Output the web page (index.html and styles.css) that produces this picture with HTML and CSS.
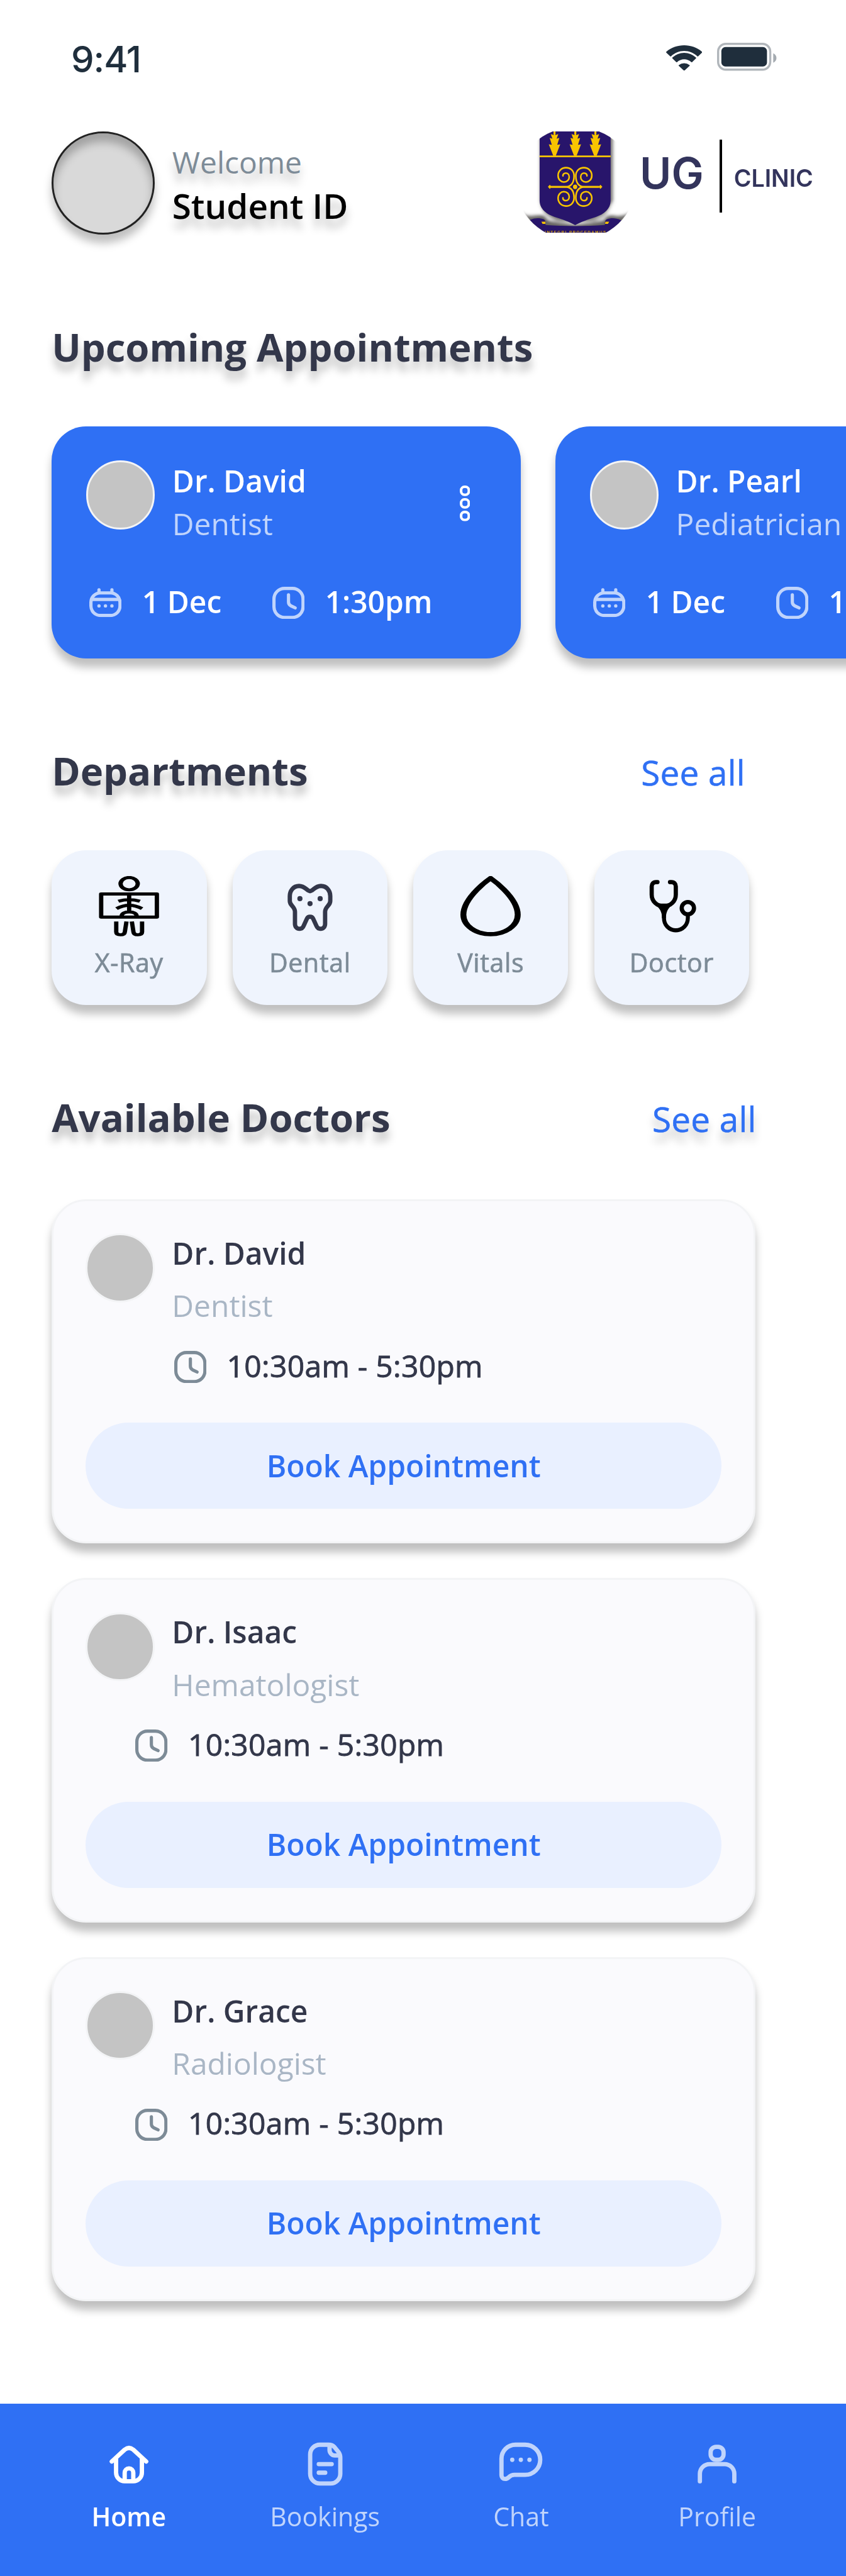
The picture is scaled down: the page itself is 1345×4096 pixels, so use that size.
FILE: index.html
```html
<!DOCTYPE html>
<html lang="en">
<head>
<meta charset="utf-8">
<title>UG Clinic</title>
<link rel="stylesheet" href="styles.css">
</head>
<body>
<svg class="defs" aria-hidden="true">
  <symbol id="calendar" viewBox="0 0 15 13.5">
    <g fill="none" stroke="currentColor" stroke-width="1.5">
      <rect x=".75" y="2.25" width="13.5" height="10.5" rx="4.4"/>
      <path d="M1.2 5.3h12.6"/>
      <path d="M4.5 .8v1.4M10.5 .8v1.4" stroke-linecap="round"/>
    </g>
    <g fill="currentColor"><circle cx="4.5" cy="8.3" r=".78"/><circle cx="7.5" cy="8.3" r=".78"/><circle cx="10.5" cy="8.3" r=".78"/></g>
  </symbol>
  <symbol id="clock" viewBox="0 0 15 15">
    <g fill="none" stroke="currentColor" stroke-width="1.5">
      <rect x=".75" y=".75" width="13.5" height="13.5" rx="4.9"/>
      <path d="M7.5 3.75V7.1c0 .8.3 1.3 1 1.7l2.1 1" stroke-linecap="round"/>
    </g>
  </symbol>
  <symbol id="more" viewBox="0 0 4.8 16.6">
    <g fill="none" stroke="currentColor" stroke-width="1.2">
      <rect x=".6" y=".6" width="3.6" height="3.7" rx="1.6"/>
      <rect x=".6" y="6.45" width="3.6" height="3.7" rx="1.6"/>
      <rect x=".6" y="12.3" width="3.6" height="3.7" rx="1.6"/>
    </g>
  </symbol>
</svg>

<div class="page">
  <div class="status">
    <span class="status-time">9:41</span>
    <svg class="wifi" viewBox="0 0 16.8 11.8">
      <g fill="#1f2e3c">
        <path d="M8.4 2.6c2.3 0 4.5.9 6.1 2.5.1.1.3.1.4 0l1.8-1.7a.3.3 0 0 0 0-.4C12.1-1 4.700-1 .1 3a.3.3 0 0 0 0 .4l1.800 1.7c.1.100.3.100.4 0C3.900 3.500 6.100 2.600 8.400 2.600z"/>
        <path d="M8.400 6.500c1.200 0 2.400.5 3.300 1.300.1.100.3.100.4 0l1.800-1.700c.1-.1.1-.3 0-.4a8 8 0 0 0-11 0c-.1.100-.1.300 0 .4l1.800 1.700c.1.100.3.100.4 0 .9-.8 2.100-1.300 3.300-1.300z"/>
        <path d="M10.900 9.200c.1.100.1.300 0 .4l-2.300 2.100a.3.3 0 0 1-.4 0L5.900 9.600c-.1-.1-.1-.3 0-.4a4 4 0 0 1 5 0z"/>
      </g>
    </svg>
    <svg class="battery" viewBox="0 0 27.800 13">
      <rect x=".5" y=".5" width="24.200" height="12" rx="3.600" fill="none" stroke="#1f2e3c" stroke-opacity=".35"/>
      <rect x="2" y="2" width="21.200" height="9" rx="1.900" fill="#1f2e3c"/>
      <path d="M26.100 4.900v4.400c.9-.4 1.500-1.200 1.500-2.200s-.6-1.800-1.500-2.200z" fill="#1f2e3c" fill-opacity=".4"/>
    </svg>
  </div>

  <header class="header">
    <div class="me"></div>
    <div class="greeting">
      <div class="welcome">Welcome</div>
      <div class="student">Student ID</div>
    </div>
    <div class="brand">
      <svg class="crest" viewBox="20 18 586 564">
        <defs>
          <clipPath id="crest-clip"><ellipse cx="313" cy="309" rx="335" ry="315"/></clipPath>
          <filter id="soft" x="-20%" y="-20%" width="140%" height="140%"><feGaussianBlur stdDeviation="10"/></filter>
          <g id="tree">
            <path d="M-5 16H5L6 28L4 38L21 33L12 58L27 54L15 92L32 90L7 154H-7L-32 90L-15 92L-27 54L-12 58L-21 33L-4 38L-6 28Z"/>
          </g>
          <g id="scroll">
            <path d="M-133 0H-46C-18 -5 -5 -29 -5 -61C-5 -89 -24 -107 -50 -107C-76 -107 -94 -87 -94 -64C-94 -40 -78 -27 -62 -27C-44 -27 -32 -39 -32 -55C-32 -69 -41 -77 -51 -77C-61 -77 -68 -70 -67 -61"/>
          </g>
        </defs>
        <g clip-path="url(#crest-clip)">
          <g filter="url(#soft)" fill="#4d4a48">
            <path d="M114 10H520V420C500 470 470 500 420 520H200C140 490 114 450 114 420Z" opacity=".75"/>
            <path d="M10 470C40 505 90 480 130 485C150 490 150 510 165 516C260 540 370 540 470 514C480 490 500 482 530 488C570 495 600 480 620 470V590H10Z" opacity=".85"/>
          </g>
          <path d="M111 420C125 490 210 520 309 541C405 515 490 490 507 420L540 400V460C500 475 480 480 466 492L445 508L309 534L190 516L155 500L130 478L90 470V400Z" fill="#fff" opacity=".72" filter="url(#soft)"/>
          <path d="M20 540C55 500 100 495 135 508C150 520 140 532 145 540C250 548 370 548 474 540C478 530 470 518 485 508C520 496 570 500 610 550V600H20Z" fill="#28156b"/>
          <path d="M111 0H507V405C507 450 470 480 425 495C380 510 340 522 309 541C280 522 240 510 195 495C150 480 111 450 111 405Z" fill="#28156b"/>
          <path d="M111 157H507" stroke="#f8c400" stroke-width="10"/>
          <g fill="#f8c400">
            <use href="#tree" x="194"/><use href="#tree" x="310"/><use href="#tree" x="422"/>
            <ellipse cx="309" cy="327" rx="12" ry="13"/>
            <path d="M157 327L168 315L177 327L168 339Z"/><path d="M461 327L450 315L441 327L450 339Z"/>
            <path d="M121 521H143V534H127Z"/><path d="M478 521H499L492 534H476Z"/>
          </g>
          <g fill="none" stroke="#f8c400" stroke-width="9" stroke-linecap="round">
            <use href="#scroll" transform="translate(308 327)"/>
            <use href="#scroll" transform="translate(308 327) scale(-1 1)"/>
            <use href="#scroll" transform="translate(308 327) scale(1 -1)"/>
            <use href="#scroll" transform="translate(308 327) scale(-1 -1)"/>
          </g>
          <text class="motto" x="310" y="587" text-anchor="middle" textLength="340">INTEGRI PROCEDAMUS</text>
        </g>
      </svg>
      <span class="ug">UG</span>
      <span class="bar"></span>
      <span class="clinic">CLINIC</span>
    </div>
  </header>

  <h2 class="title">Upcoming Appointments</h2>
  <div class="appointments">
    <article class="appt">
      <div class="appt-top">
        <div class="avatar"></div>
        <div class="who"><div class="name">Dr. David</div><div class="role">Dentist</div></div>
        <svg class="more"><use href="#more"/></svg>
      </div>
      <div class="when">
        <svg class="ic-cal"><use href="#calendar"/></svg><span class="date">1 Dec</span>
        <svg class="ic-clock"><use href="#clock"/></svg><span>1:30pm</span>
      </div>
    </article>
    <article class="appt">
      <div class="appt-top">
        <div class="avatar"></div>
        <div class="who"><div class="name">Dr. Pearl</div><div class="role">Pediatrician</div></div>
      </div>
      <div class="when">
        <svg class="ic-cal"><use href="#calendar"/></svg><span class="date">1 Dec</span>
        <svg class="ic-clock"><use href="#clock"/></svg><span>1:30pm</span>
      </div>
    </article>
  </div>

  <div class="row row-dept">
    <h2>Departments</h2>
    <a class="see">See all</a>
  </div>
  <div class="tiles">
    <div class="tile">
      <svg viewBox="366 750 224 313" preserveAspectRatio="none">
        <g fill="none" stroke="#000" stroke-width="16">
          <circle cx="479" cy="789.500" r="32"/>
          <rect x="375" y="843" width="207" height="120" stroke-linejoin="round"/>
          <path d="M479 843V932M439 881Q479 864 519 881M432 919Q479 885 527 919M451 957C452 944 463 936 479 936S506 944 507 957"/>
          <path d="M431 986V1040Q431 1055 447 1055Q462 1055 463 1040L469 986M489 986L495 1040Q496 1055 511 1055Q527 1055 527 1040V986"/>
        </g>
      </svg>
      <span>X-Ray</span>
    </div>
    <div class="tile">
      <svg viewBox="-3.500 -3.600 28 28">
        <path d="M10.500 3.400C9.100 3.400 8.300 1 5.400 1C2.600 1 1.100 3.400 1.100 5.700V8C1.100 10.200 3.500 10.600 3.500 13V18.600C3.500 20 4.400 20.900 5.600 20.900C6.600 20.900 7.200 20.400 7.500 19.600L9 16.300C9.400 15.400 9.900 15.300 10.500 15.300C11.100 15.300 11.600 15.400 12 16.300L13.500 19.600C13.800 20.400 14.400 20.900 15.400 20.900C16.600 20.900 17.500 20 17.500 18.600V13C17.500 10.600 19.900 10.200 19.900 8V5.700C19.900 3.400 18.400 1 15.600 1C12.700 1 11.900 3.400 10.500 3.400Z" fill="none" stroke="#33374a" stroke-width="2" stroke-linejoin="round"/>
        <g fill="#33374a"><circle cx="5.800" cy="6.900" r="1.200"/><circle cx="15.200" cy="6.900" r="1.200"/><circle cx="10.500" cy="9.200" r="1.200"/></g>
      </svg>
      <span>Dental</span>
    </div>
    <div class="tile">
      <svg viewBox="231 750 224 313" preserveAspectRatio="none">
        <path d="M343 761C343 761 242 858 242 951A101 101 0 0 0 444 951C444 858 343 761 343 761Z" fill="none" stroke="#000" stroke-width="22" stroke-linejoin="round"/>
      </svg>
      <span>Vitals</span>
    </div>
    <div class="tile">
      <svg viewBox="-3.700 -1.800 28 28">
        <g fill="none" stroke="#000" stroke-width="1.950" stroke-linecap="round">
          <path d="M3.700 1H3C1.700 1 1 1.800 1 3V6.800C1 9.900 3.400 12.200 6.600 12.200S12.200 9.900 12.200 6.800V3C12.200 1.800 11.500 1 10.200 1H9.500"/>
          <path d="M6.700 14V17.600C6.700 20.900 9 23.400 12.200 23.400S17.800 20.900 17.800 17.600V16.500" stroke-width="1.850"/>
          <circle cx="17.800" cy="13.100" r="2.850"/>
        </g>
        <path d="M2.200 11C4.800 13.200 5.800 14.800 5.800 17.800H7.600C7.600 15 8.500 13.200 11 11Z"/>
      </svg>
      <span>Doctor</span>
    </div>
  </div>

  <div class="row row-doctors">
    <h2>Available Doctors</h2>
    <a class="see shaded">See all</a>
  </div>
  <div class="doctors">
    <article class="doctor">
      <div class="avatar"></div>
      <div class="info">
        <div class="name">Dr. David</div>
        <div class="role">Dentist</div>
        <div class="hours"><svg class="ic-clock"><use href="#clock"/></svg><span>10:30am - 5:30pm</span></div>
      </div>
      <button class="book">Book Appointment</button>
    </article>
    <article class="doctor">
      <div class="avatar"></div>
      <div class="info">
        <div class="name">Dr. Isaac</div>
        <div class="role">Hematologist</div>
        <div class="hours outdent"><svg class="ic-clock"><use href="#clock"/></svg><span>10:30am - 5:30pm</span></div>
      </div>
      <button class="book">Book Appointment</button>
    </article>
    <article class="doctor">
      <div class="avatar"></div>
      <div class="info">
        <div class="name">Dr. Grace</div>
        <div class="role">Radiologist</div>
        <div class="hours outdent"><svg class="ic-clock"><use href="#clock"/></svg><span>10:30am - 5:30pm</span></div>
      </div>
      <button class="book">Book Appointment</button>
    </article>
  </div>

  <nav class="nav">
    <a class="nav-item active">
      <svg viewBox="0 0 24 24"><path d="M4 10.800L10 5.300Q12 3.700 14 5.300L20 10.800M6 9.500V16a4 4 0 0 0 4 4h4a4 4 0 0 0 4-4V9.500M10 20v-4a2 2 0 0 1 4 0v4"/></svg>
      <span>Home</span>
    </a>
    <a class="nav-item">
      <svg viewBox="0 0 24 24"><path d="M13.500 3H9.500A4.500 4.500 0 0 0 5 7.500v9A4.500 4.500 0 0 0 9.500 21h5a4.500 4.500 0 0 0 4.500-4.500V9c0-1-.3-1.900-.9-2.700L16.200 4C15.500 3.300 14.600 3 13.500 3zM14 3.200V5.500A2.500 2.500 0 0 0 16.500 8h2.200M9 12h6M9 16h3"/></svg>
      <span>Bookings</span>
    </a>
    <a class="nav-item">
      <svg viewBox="0 0 24 24"><path d="M9.500 3H14A7 7 0 0 1 14 17H9C7.900 17 7.100 17.400 6.300 18.200C5.800 18.700 5.400 18.900 4.700 18.900C3.700 18.900 3 18.200 3 17.200V9.500A6.500 6.500 0 0 1 9.500 3Z"/><g class="dots"><circle cx="8" cy="10" r="1"/><circle cx="12" cy="10" r="1"/><circle cx="16" cy="10" r="1"/></g></svg>
      <span>Chat</span>
    </a>
    <a class="nav-item">
      <svg viewBox="0 0 24 24"><rect x="9" y="4" width="6" height="6" rx="2.500"/><path d="M4 20v-3.500A4.500 4.500 0 0 1 8.500 12h7a4.500 4.500 0 0 1 4.500 4.500V20"/></svg>
      <span>Profile</span>
    </a>
  </nav>
</div>
</body>
</html>
```

FILE: styles.css
```css
/* 393-unit wide phone layout; .1rem is one design unit */
html {
  font-size: calc(1000vw / 393);
}

* {
  box-sizing: border-box;
}

body {
  margin: 0;
  background: #fff;
  font-family: "Open Sans", "Noto Sans", sans-serif;
  font-size: 1.4rem;
  color: #33374a;
}

.defs {
  display: none;
}

svg {
  display: block;
  flex: none;
}

.page {
  display: flex;
  flex-direction: column;
  width: 39.3rem;
  height: 119.68rem;
  overflow: hidden;
  white-space: nowrap;
}

/* status bar */
.status {
  display: flex;
  align-items: flex-start;
  height: 6.1rem;
  padding: 1.68rem 3.22rem 0 3.3rem;
}

.status-time {
  flex: 1;
  font: 500 1.7rem/2.2rem Inter, sans-serif;
  letter-spacing: -.03rem;
  color: #1f2e3c;
}

.wifi {
  width: 1.68rem;
  height: 1.18rem;
  margin: .42rem .69rem 0 0;
}

.battery {
  width: 2.78rem;
  height: 1.3rem;
  margin-top: .32rem;
}

/* header */
.header {
  display: flex;
  height: 4.8rem;
  padding-left: 2.4rem;
}

.me {
  width: 4.8rem;
  height: 4.8rem;
  border: .1rem solid #222;
  border-radius: 50%;
  background: #d9d9d9;
  box-shadow: 0 .4rem .4rem rgba(0, 0, 0, .25), inset 0 .4rem .4rem rgba(0, 0, 0, .25);
}

.greeting {
  flex: 1;
  padding: .46rem 0 0 .8rem;
  text-shadow: 0 .4rem .4rem rgba(0, 0, 0, .25);
}

.welcome {
  line-height: 1.9rem;
  color: #7d8b97;
}

.student {
  font-size: 1.6rem;
  font-weight: 600;
  line-height: 2.14rem;
  color: #000;
}

.brand {
  display: flex;
  width: 14.98rem;
  font-family: Inter, sans-serif;
  font-weight: 600;
  color: #33345c;
}

.crest {
  width: 4.88rem;
  height: 4.7rem;
}

.motto {
  font: 700 22px "Liberation Sans", sans-serif;
  fill: #d9a916;
}

.ug {
  width: 3.72rem;
  margin: .76rem 0 0 .52rem;
  font-size: 2rem;
  line-height: 2.4rem;
}

.bar {
  width: .1rem;
  height: 3.38rem;
  margin-top: .4rem;
  background: #000;
}

.clinic {
  margin: 1.49rem 0 0 .55rem;
  font-size: 1.1rem;
  line-height: 1.4rem;
}

/* headings */
h2 {
  margin: 0;
  font-size: 1.8rem;
  font-weight: 700;
  line-height: 2.5rem;
  text-shadow: 0 .4rem .4rem rgba(0, 0, 0, .25);
}

.title {
  margin: 3.96rem 0 0 2.4rem;
}

.row {
  display: flex;
  justify-content: space-between;
  align-items: baseline;
  height: 2.5rem;
  padding-left: 2.4rem;
}

.row-dept {
  margin-top: 3.96rem;
  padding-right: 4.68rem;
}

.row-doctors {
  margin-top: 3.96rem;
  padding-right: 4.16rem;
}

/* medium weight: the regular face thickened slightly */
.see,
.when,
.tile,
.hours {
  -webkit-text-stroke: .018em currentColor;
}

.see {
  font-size: 1.6rem;
  line-height: 2.2rem;
  letter-spacing: .005em;
  color: #2f70f4;
  -webkit-text-stroke-width: .01em;
}

.shaded {
  text-shadow: 0 .4rem .4rem rgba(0, 0, 0, .25);
}

/* upcoming appointments */
.appointments {
  display: flex;
  gap: 1.6rem;
  margin-top: 2.44rem;
  padding-left: 2.4rem;
}

.appt {
  flex: none;
  width: 21.8rem;
  height: 10.8rem;
  padding: 1.6rem;
  border-radius: 1.6rem;
  background: #2f70f4;
  box-shadow: 0 .4rem .4rem rgba(0, 0, 0, .25);
  color: #fff;
}

.appt-top {
  display: flex;
  height: 5.56rem;
}

.avatar {
  flex: none;
  width: 3.2rem;
  height: 3.2rem;
  border: .1rem solid #f3f4f6;
  border-radius: 50%;
  background: #c4c4c4;
}

.who {
  flex: 1;
  margin: -.04rem 0 0 .8rem;
  line-height: 2rem;
}

.name {
  font-weight: 600;
}

.appt .role,
.appt .ic-cal,
.appt .ic-clock {
  color: #c0d4fc;
}

.more {
  width: .48rem;
  height: 1.66rem;
  margin: 1.17rem .76rem 0 0;
}

.when {
  display: flex;
  align-items: center;
  padding-left: .15rem;
  line-height: 2rem;
  letter-spacing: .012em;
}

.ic-cal {
  width: 1.5rem;
  height: 1.35rem;
  margin: .09rem .95rem 0 0;
}

.ic-clock {
  width: 1.5rem;
  height: 1.5rem;
  margin: .09rem .95rem 0 0;
}

.date {
  width: 6.05rem;
}

.when span {
  font-weight: 600;
  letter-spacing: 0;
  -webkit-text-stroke-width: 0;
}

/* departments */
.tiles {
  display: flex;
  gap: 1.2rem;
  margin-top: 2.44rem;
  padding-left: 2.4rem;
}

.tile {
  display: flex;
  flex-direction: column;
  align-items: center;
  gap: .43rem;
  width: 7.2rem;
  height: 7.2rem;
  padding-top: 1.2rem;
  border-radius: 1.6rem;
  background: #eff4fd;
  box-shadow: 0 .4rem .4rem rgba(0, 0, 0, .25);
  font-size: 1.2rem;
  line-height: 1.6rem;
  letter-spacing: .016em;
  color: #7d8b97;
}

.tile svg {
  width: 2.8rem;
  height: 2.8rem;
}

/* available doctors */
.doctors {
  display: flex;
  flex-direction: column;
  gap: 1.6rem;
  margin-top: 2.56rem;
  padding-left: 2.4rem;
}

.doctor {
  display: grid;
  grid-template-columns: 3.2rem 1fr;
  grid-template-rows: 8.8rem 4rem;
  column-gap: .8rem;
  width: 32.7rem;
  height: 16rem;
  padding: 1.5rem;
  border: .1rem solid #f3f4f6;
  border-radius: 1.6rem;
  background: #fafafd;
  box-shadow: 0 .4rem .4rem rgba(0, 0, 0, .25);
}

.info {
  margin-top: -.06rem;
  line-height: 2rem;
}

.doctor .role {
  margin: .43rem 0 .79rem;
  color: #a9b6c5;
}

.hours {
  display: flex;
  align-items: center;
  padding-left: .1rem;
  letter-spacing: .007em;
}

.hours .ic-clock {
  color: #7d8b97;
}

.outdent {
  margin-left: -1.8rem;
}

.book {
  grid-column: 1 / -1;
  padding: 0;
  border: 0;
  border-radius: 2rem;
  background: #e9f0ff;
  font: 600 1.4rem/2rem "Open Sans", sans-serif;
  color: #2f70f4;
}

/* bottom navigation */
.nav {
  display: flex;
  flex: none;
  height: 8rem;
  margin-top: auto;
  padding: 1.6rem 1.43rem 0;
  background: #2f70f4;
}

.nav-item {
  display: flex;
  flex: 1;
  flex-direction: column;
  align-items: center;
  gap: .43rem;
  font-size: 1.2rem;
  line-height: 1.6rem;
  color: #c0d4fc;
}

.nav-item svg {
  width: 2.4rem;
  height: 2.4rem;
  fill: none;
  stroke: currentColor;
  stroke-width: 2;
  stroke-linecap: round;
  stroke-linejoin: round;
}

.nav-item .dots {
  fill: currentColor;
  stroke: none;
}

.active {
  font-weight: 600;
  color: #fff;
}
```
